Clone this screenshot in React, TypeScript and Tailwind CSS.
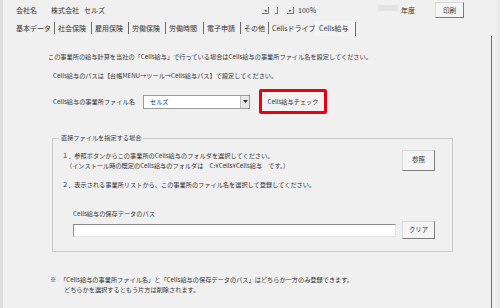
import React from "react";

function WinButton({ label, w, h }: { label: string; w: string; h: string }) {
  return (
    <div
      className={`${w} ${h} flex items-center justify-center bg-[#f5f5f5] border border-t-[#d8d8d8] border-l-[#d8d8d8] border-r-[#7c7c7c] border-b-[#7c7c7c] text-[6.4px] leading-none text-[#333]`}
    >
      {label}
    </div>
  );
}

function Sep() {
  return <div className="w-px h-[12px] bg-[#6a6a6a]" />;
}

export default function App() {
  const tabs: { label: string; w: string; pl: string; sep: boolean }[] = [
    { label: "基本データ", w: "w-[38px]", pl: "pl-0", sep: true },
    { label: "社会保険", w: "w-[36px]", pl: "pl-[3px]", sep: true },
    { label: "雇用保険", w: "w-[36px]", pl: "pl-[3px]", sep: true },
    { label: "労働保険", w: "w-[36px]", pl: "pl-[3px]", sep: true },
    { label: "労働時間", w: "w-[37px]", pl: "pl-[3px]", sep: true },
    { label: "電子申請", w: "w-[36px]", pl: "pl-[3px]", sep: true },
    { label: "その他", w: "w-[27px]", pl: "pl-[3px]", sep: true },
    { label: "Cellsドライブ", w: "w-[46px]", pl: "pl-[3px]", sep: false },
  ];
  return (
    <div className="w-[500px] h-[308px] bg-[#f0f0f0] overflow-hidden flex text-[#333] font-['Noto_Sans_CJK_JP','Noto_Sans',sans-serif]">
      <div className="w-[3px] h-full bg-[#dedede]" />
      <div className="w-[494px] flex flex-col">
        {/* header */}
        <div className="h-[20px] flex items-center pl-[13px] text-[7px] leading-none">
          <span className="w-[35px]">会社名</span>
          <span className="w-[33px]">株式会社</span>
          <span className="w-[178px]">セルズ</span>
          <div className="flex items-center h-[8px] text-[5px] text-[#444]">
            <span className="w-[7px] h-[7px] flex items-center justify-center border-r border-b border-[#777]">◂</span>
            <span className="w-[6px]" />
            <span className="w-[3px] h-[7px] border-r border-b border-[#777]" />
            <span className="w-[9px]" />
            <span className="w-[7px] h-[7px] flex items-center justify-center border-r border-b border-[#777]">▸</span>
          </div>
          <span className="ml-[4px] w-[80px]">100%</span>
          <div className="w-[20px] h-[6px] bg-[#e3e3e3] -mt-[4px]" />
          <span className="ml-[3px] w-[34px]">年度</span>
          <div className="w-[29px] h-[16px] flex items-center justify-center bg-[#f5f5f5] border border-t-[#d8d8d8] border-l-[#d8d8d8] border-r-[#7c7c7c] border-b-[#7c7c7c] text-[6.6px]">
            印刷
          </div>
        </div>
        {/* tabs */}
        <div className="h-[16px] flex items-center pl-[13px] text-[7px] leading-none">
          {tabs.map((t) => (
            <React.Fragment key={t.label}>
              <div className={`${t.w} ${t.pl} whitespace-nowrap`}>{t.label}</div>
              {t.sep && <Sep />}
            </React.Fragment>
          ))}
          <div className="w-[40px] h-[15px] pl-[4px] flex items-center bg-[#f4f4f4]">Cells給与</div>
          <div className="w-px h-[14px] bg-[#6a6a6a] mt-[2px]" />
        </div>
        {/* panel */}
        <div className="w-[489px] flex-1 border-r border-[#6e6e6e] flex flex-col text-[6.2px] leading-[10px]">
          <div className="mt-[16px] pl-[45px] whitespace-nowrap">
            この事業所の給与計算を当社の「Cells給与」で行っている場合はCells給与の事業所ファイル名を設定してください。
          </div>
          <div className="mt-[9px] pl-[50px] whitespace-nowrap">
            Cells給与のパスは【台帳MENU→ツール→Cells給与パス】で設定してください。
          </div>
          <div className="mt-[8px] h-[25px] pl-[50px] flex items-center">
            <span className="w-[90px] whitespace-nowrap">Cells給与の事業所ファイル名</span>
            <div className="w-[107px] h-[14px] bg-white border border-[#9a9a9a] flex items-center">
              <span className="flex-1 pl-[6px]">セルズ</span>
              <div className="w-[9px] h-full bg-[#e8e8e8] border-l border-[#c0c0c0] flex items-center justify-center">
                <svg width="5" height="3" viewBox="0 0 5 3">
                  <path d="M0 0 H5 L2.5 3 Z" fill="#333" />
                </svg>
              </div>
            </div>
            <div className="ml-[9px] w-[68px] h-[25px] border-[3px] border-[#e60012] rounded-[2px] flex items-center justify-center bg-[#f2f2f2]">
              Cells給与チェック
            </div>
          </div>
          <fieldset className="mt-[19px] ml-[49px] w-[401px] border border-[#c9c9c9] pr-[17px] pb-[12px]">
            <legend className="ml-[6px] px-[2px] leading-[10px]">直接ファイルを指定する場合</legend>
            <div className="mt-[7px] pl-[9px] flex justify-between">
              <div className="pt-[1px]">
                <div className="whitespace-nowrap">１．参照ボタンからこの事業所のCells給与のフォルダを選択してください。</div>
                <div className="whitespace-nowrap pl-[4px]">（インストール時の既定のCells給与のフォルダは　C:¥Cells¥Cells給与　です。）</div>
              </div>
              <WinButton label="参照" w="w-[33px]" h="h-[21px]" />
            </div>
            <div className="mt-[9px] pl-[9px] whitespace-nowrap">
              ２．表示される事業所リストから、この事業所のファイル名を選択して登録してください。
            </div>
            <div className="mt-[19px] pl-[20px] whitespace-nowrap">Cells給与の保存データのパス</div>
            <div className="mt-[2px] pl-[20px] flex items-center">
              <div className="w-[323px] h-[13px] bg-white border border-t-[#8a8a8a] border-l-[#8a8a8a] border-r-[#e4e4e4] border-b-[#e4e4e4]" />
              <div className="ml-[6px]">
                <WinButton label="クリア" w="w-[33px]" h="h-[18px]" />
              </div>
            </div>
          </fieldset>
          <div className="mt-[23px] pl-[47px] flex">
            <span className="w-[10px]">※</span>
            <div>
              <div className="whitespace-nowrap">「Cells給与の事業所ファイル名」と「Cells給与の保存データのパス」はどちらか一方のみ登録できます。</div>
              <div className="whitespace-nowrap pl-[4px]">どちらかを選択するともう片方は削除されます。</div>
            </div>
          </div>
        </div>
      </div>
      <div className="w-[3px] h-full bg-[#e4eaf3]" />
    </div>
  );
}
